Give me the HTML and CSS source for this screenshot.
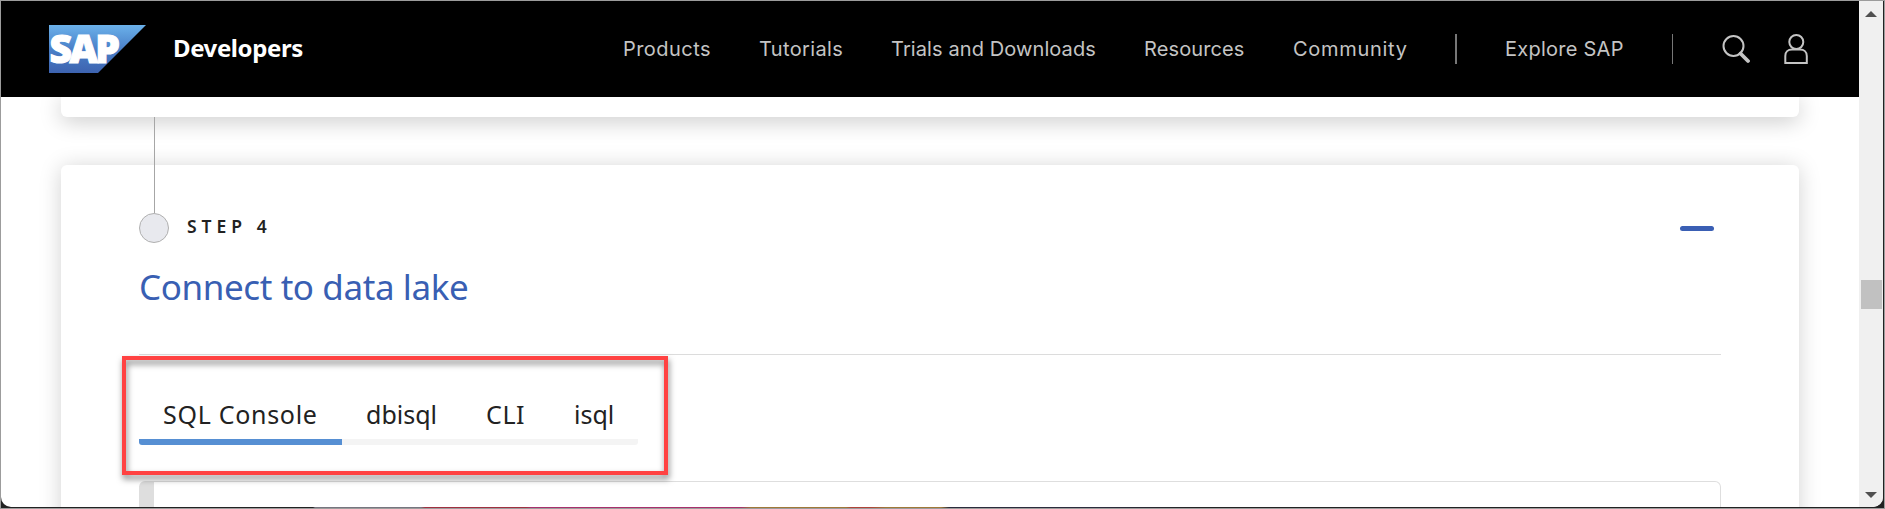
FILE: index.html
```html
<!DOCTYPE html>
<html lang="en">
<head>
<meta charset="utf-8">
<title>SAP Developers</title>
<link rel="stylesheet" href="styles.css">
</head>
<body>
<div class="window">
  <div class="page">
    <header class="header">
      <svg class="logo" viewBox="0 0 97 48" width="97" height="48">
        <defs><linearGradient id="g" x1="0" y1="0" x2="0" y2="1"><stop offset="0" stop-color="#6bb1ea"/><stop offset=".5" stop-color="#4a80c8"/><stop offset="1" stop-color="#3d63b0"/></linearGradient></defs>
        <path d="M0 0H97L49 48H0Z" fill="url(#g)"/>
        <text class="logo-text" x="0.5" y="38">SAP</text>
      </svg>
      <span class="brand">Developers</span>
      <nav class="nav">
        <a class="n1">Products</a>
        <a class="n2">Tutorials</a>
        <a class="n3">Trials and Downloads</a>
        <a class="n4">Resources</a>
        <a class="n5">Community</a>
        <i class="divider thick"></i>
        <a class="n6">Explore SAP</a>
        <i class="divider"></i>
        <svg class="search" width="28" height="30" viewBox="0 0 28 30"><circle cx="11.5" cy="12" r="10" fill="none" stroke="#c4c4c4" stroke-width="2"/><path d="M18.5 19.5L26 27" stroke="#c4c4c4" stroke-width="3.8" stroke-linecap="round"/></svg>
        <svg class="user" width="24" height="32" viewBox="0 0 24 32"><g fill="none" stroke="#c4c4c4" stroke-width="2"><circle cx="12.3" cy="9" r="7"/><path d="M1.3 30V23C1.3 19 4 16.6 8 16.6H16C20 16.6 22.8 19 22.8 23V30Z"/></g></svg>
      </nav>
    </header>
    <main class="content">
      <section class="card previous"></section>
      <div class="connector"></div>
      <section class="card step">
        <div class="step-head"><i class="dot"></i><span class="step-label">STEP 4</span><i class="collapse"></i></div>
        <h2 class="title">Connect to data lake</h2>
        <div class="tabs">
          <span class="tab active"><b class="t1">SQL Console</b></span>
          <span class="tab"><b class="t2">dbisql</b></span>
          <span class="tab"><b class="t3">CLI</b></span>
          <span class="tab"><b class="t4">isql</b></span>
        </div>
        <div class="highlight"></div>
        <div class="panel"></div>
      </section>
    </main>
  </div>
  <aside class="scrollbar">
    <svg width="12" height="6"><path d="M0 6L6 0L12 6Z" fill="#505050"/></svg>
    <i class="thumb"></i>
    <svg width="12" height="6"><path d="M0 0H12L6 6Z" fill="#505050"/></svg>
  </aside>
</div>
</body>
</html>
```
FILE: styles.css
```css
* { box-sizing: border-box; }
html { background: #111; }
body { margin: 0; width: 1885px; height: 509px; overflow: hidden; border: 1px solid #9c9c9c; background: #222 linear-gradient(90deg, #222 312px, #77757f 314px 420px, #a03040 424px 525px, #a8306c 530px 740px, #a07838 750px 845px, #b04438 850px 870px, #a07838 885px 940px, #2c2c3c 948px 1100px, #222 1200px); font-family: "Noto Sans", sans-serif; }
.window { display: flex; width: 1882px; height: 506px; overflow: hidden; background: #fff; border-radius: 0 0 10px 10px; }
.page { width: 1858px; height: 506px; overflow: hidden; }
.header { position: relative; z-index: 2; display: flex; align-items: center; height: 96px; padding-left: 48px; background: #000; }
.logo { overflow: visible; }
.logo-text { font: 800 39px "Open Sans", sans-serif; letter-spacing: -2.6px; fill: #fff; stroke: #fff; stroke-width: 1.2px; }
.brand { margin: -2px 0 0 27px; width: 131px; color: #fff; font: 700 24px/30px "Noto Sans", sans-serif; letter-spacing: -.4px; white-space: nowrap; }
.nav { display: flex; align-items: center; margin-left: 319px; color: #c4c4c4; font: 20px/30px Inter, sans-serif; white-space: nowrap; }
.nav a { flex: none; }
.n1 { width: 136px; letter-spacing: .45px; }
.n2 { width: 132px; letter-spacing: .35px; }
.n3 { width: 253px; letter-spacing: .1px; }
.n4 { width: 149px; letter-spacing: .12px; }
.n5 { width: 162px; letter-spacing: .7px; }
.n6 { width: 167px; letter-spacing: .25px; margin-left: -1px; }
.divider { width: 1px; height: 30px; margin-right: 49px; background: #777; }
.divider.thick { width: 2px; }
.search { margin-right: 34px; }
.content { width: 1738px; margin-left: 60px; }
.card { background: #fff; border-radius: 6px; box-shadow: 0 2px 22px rgba(0,0,0,.18); }
.previous { height: 20px; border-radius: 0 0 6px 6px; box-shadow: 0 4px 22px rgba(0,0,0,.22); }
.connector { position: relative; z-index: 1; width: 1px; height: 96px; margin: 0 0 -48px 93px; background: #a6a6a6; }
.step { height: 400px; padding: 48px 78px 0 78px; }
.step-head { display: flex; align-items: center; height: 30px; }
.dot { width: 30px; height: 30px; border: 1.5px solid #b0b0b0; border-radius: 50%; background: #e8e9ee; }
.step-label { margin: -4px 0 0 18px; color: #222; font: 600 17.5px/30px "Noto Sans", sans-serif; letter-spacing: 5px; }
.collapse { width: 34px; height: 5px; margin: 0 7px 0 auto; border-radius: 3px; background: #3a5fb4; }
.title { height: 112px; margin: 0; padding-top: 19px; border-bottom: 1px solid #dcdcdc; color: #395fb3; font: 400 35px/50px "Noto Sans", sans-serif; letter-spacing: -.4px; white-space: nowrap; }
.tabs { display: flex; width: 499px; height: 90px; padding-top: 41px; border-radius: 3px; overflow: hidden; }
.tab { height: 49px; padding: 0 24px; border-bottom: 6px solid #f4f4f4; color: #222; font: 25px/36px "Noto Sans", sans-serif; white-space: nowrap; }
.tab b { display: block; font-weight: 400; }
.tab.active { border-color: #568fd3; }
.t1 { width: 155px; letter-spacing: .7px; } .t2 { width: 72px; } .t3 { width: 40px; letter-spacing: .6px; } .t4 { width: 42px; }
.highlight { position: absolute; left: 122px; top: 356px; width: 546px; height: 119px; border: 4px solid #ff4242; filter: drop-shadow(1px 4px 3px rgba(0,0,0,.5)); }
.panel { height: 60px; margin-top: 36px; border: 1px solid #dedede; border-left: 15px solid #dedede; border-radius: 6px; }
.scrollbar { display: flex; flex-direction: column; align-items: center; width: 24px; height: 506px; padding: 10px 0 9px; background: #f0f0f0; }
.thumb { width: 21px; height: 29px; margin: 263px 0 auto; background: #c1c1c1; }
```
